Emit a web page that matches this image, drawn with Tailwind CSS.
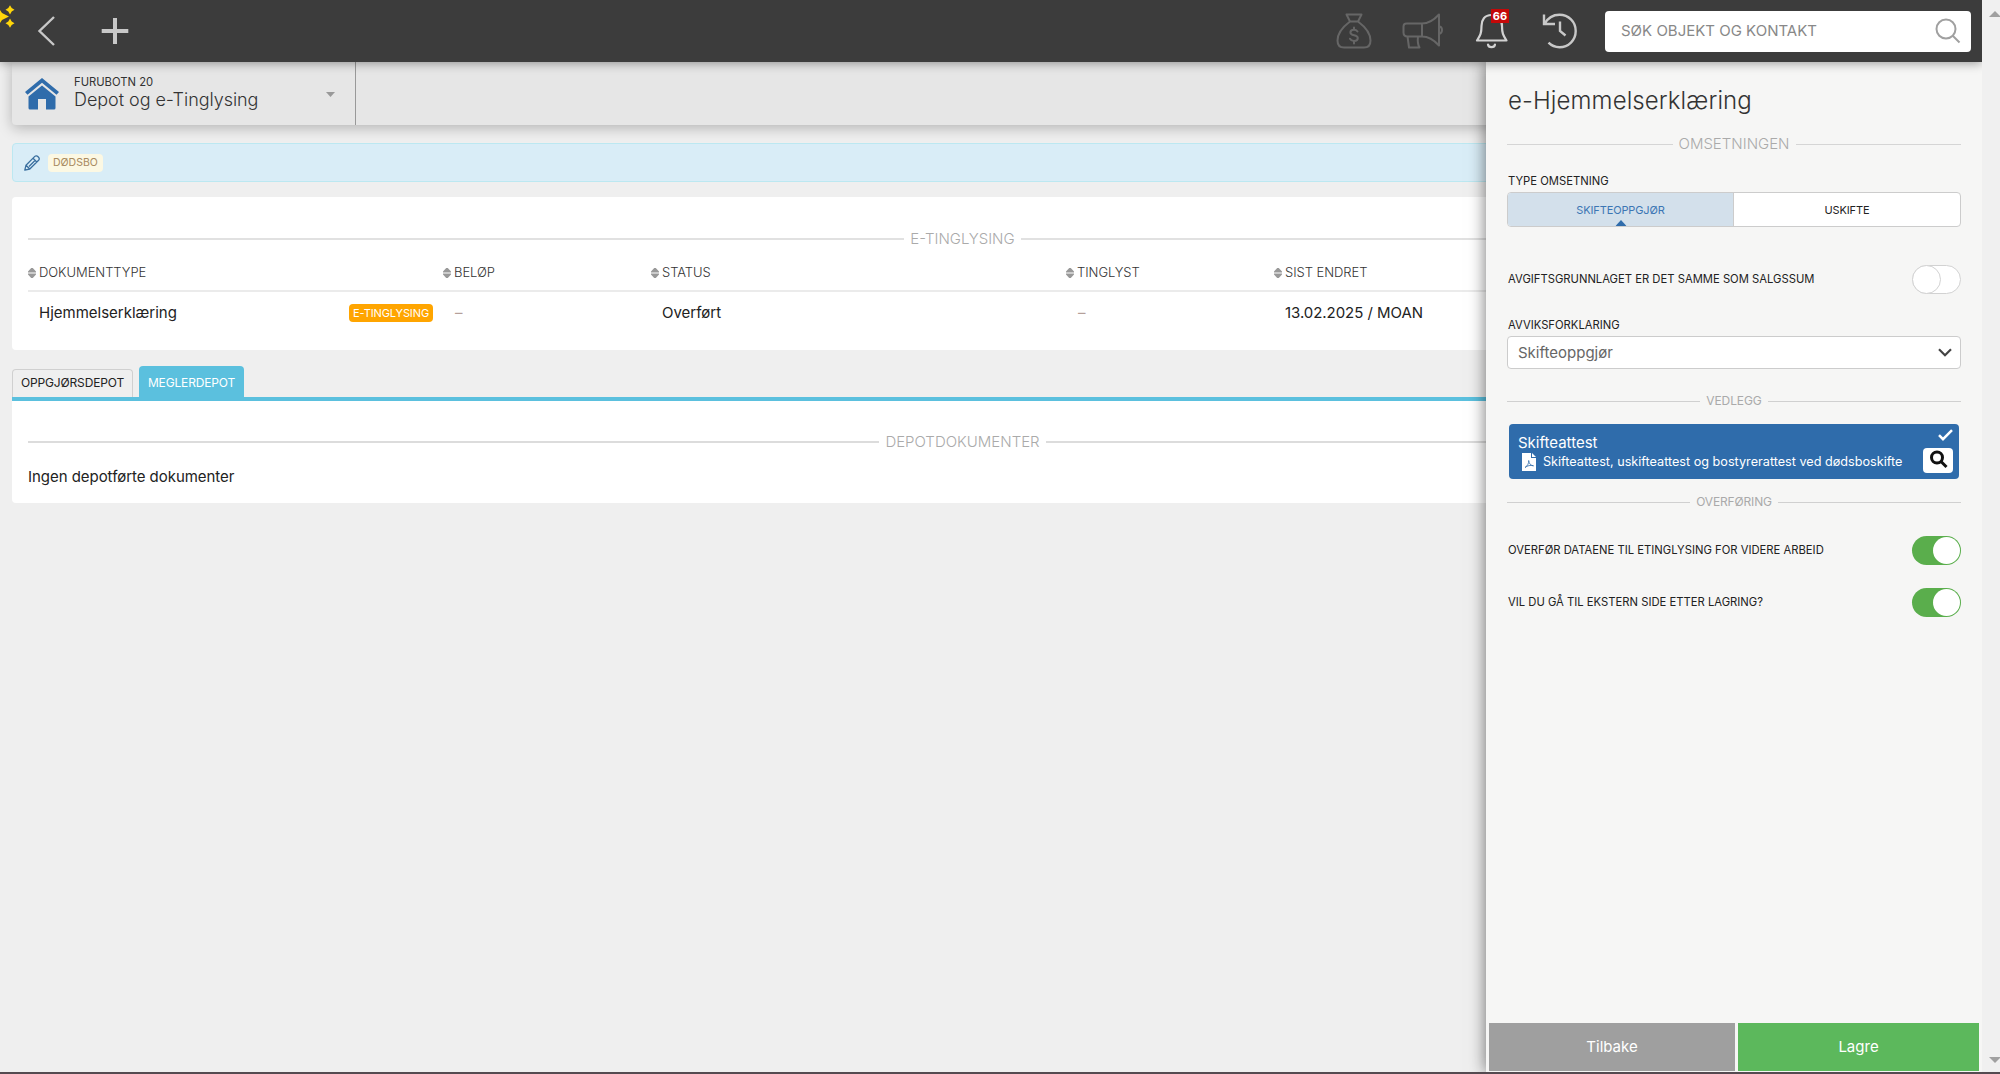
<!DOCTYPE html>
<html lang="no">
<head>
  <meta charset="UTF-8">
  <title>Depot og e-Tinglysing</title>
  <script src="https://cdn.jsdelivr.net/npm/@tailwindcss/browser@4"></script>
</head>
<body class="h-screen overflow-hidden bg-[#efefef] font-['Inter',sans-serif] text-[#222] flex flex-col">
  <div class="flex flex-1 min-h-0">
    <div class="relative w-[1982px] flex flex-col">

      <!-- Toppmeny -->
      <header class="relative z-20 h-[62px] shrink-0 bg-[#3c3c3c] shadow-[0_1px_10px_rgba(0,0,0,0.4)] flex items-center pr-[11px]">
        <svg class="absolute left-0 top-0" width="16" height="30" viewBox="0 0 16 30" fill="#ffd60a">
          <path d="M-2 7l4 6 7 3.500-7 3.500-4 6z"/>
          <path d="M10 5.200l1.700 2.900 2.800 1.700-2.800 1.700L10 14.400l-1.700-2.900-2.800-1.700 2.800-1.700zM10 18.600l1.700 2.900 2.800 1.700-2.800 1.700L10 27.800l-1.700-2.900-2.800-1.700 2.800-1.700z"/>
        </svg>
        <svg class="ml-[37px]" width="20" height="32" viewBox="0 0 20 32" fill="none" stroke="#c8c8c8" stroke-width="2.400"><path d="M17 2L2.500 16 17 30"/></svg>
        <svg class="ml-[44px]" width="28" height="28" viewBox="0 0 28 28" fill="none" stroke="#c8c8c8" stroke-width="4"><path d="M14 1v26M.7 14h26.600"/></svg>

        <div class="ml-auto flex items-center">
          <svg width="36" height="36" viewBox="0 0 36 36" fill="none" stroke="#666" stroke-width="2" stroke-linejoin="round" stroke-linecap="round">
            <path d="M10.500 1.500h15l-3.500 7h-8zM14 8.500C8 13 1.500 19 1.500 27.500c0 5 2.500 7 6.500 7h20c4 0 6.500-2 6.500-7C34.500 19 28 13 22 8.500"/>
            <path d="M21.500 18.500c-1-1.500-2.200-1.800-3.600-1.800-2 0-3.500 1-3.500 2.700 0 4 7.400 1.600 7.400 5.600 0 1.800-1.600 2.900-3.800 2.900-1.800 0-3.200-.7-4-2.200M18 14.500v2M18 28v2.500"/>
          </svg>
          <svg class="ml-[30px]" width="42" height="36" viewBox="0 0 42 36" fill="none" stroke="#666" stroke-width="2" stroke-linejoin="round">
            <path d="M20 10.500H4.500c-2 0-3 1-3 3v6c0 2.500 1.500 4 4 4H20c6 0 12 3.500 17 9V1.500c-5 5.500-11 9-17 9zM20 10.500v13M5.500 23.500l1.500 11h10.500c-1.800-3-2-7-1.500-11M37 13c4 1 4 7 0 8"/>
          </svg>
          <div class="relative ml-[31px]">
            <svg width="34" height="36" viewBox="0 0 34 36" fill="none" stroke="#d2d2d2" stroke-width="2.200" stroke-linejoin="round" stroke-linecap="round">
              <path d="M16.500 2C9.500 2 6.500 7 6.500 13c0 7-1 9-4.500 14.500h29.500C28 22 27 20 27 13 27 7 23.500 2 16.500 2zM13 31.500c.5 3.500 6.500 3.500 7 0"/>
            </svg>
            <span class="absolute left-[16px] -top-[4px] w-[18px] h-[14px] bg-[#c40808] text-white text-[11px] leading-[14px] font-bold text-center">66</span>
          </div>
          <svg class="ml-[33px]" width="36" height="36" viewBox="0 0 36 36" fill="none" stroke="#c8c8c8" stroke-width="2.400">
            <path d="M2 1.500v9.500h11M2.500 11C6 4.500 11 1.800 17.500 1.800c9 0 16.200 7 16.200 16.200S26.500 34.200 17.500 34.200c-4.500 0-8-1.500-11-4.500M18 8.500V18l5.500 4.500"/>
          </svg>
          <div class="ml-[27px] w-[366px] h-[41px] bg-white rounded flex items-center justify-between pl-4 pr-[10px]">
            <span class="text-[15px] text-[#888]">SØK OBJEKT OG KONTAKT</span>
            <svg width="26" height="26" viewBox="0 0 26 26" fill="none" stroke="#a0a0a0" stroke-width="2"><circle cx="11" cy="11" r="9.500"/><path d="M17.500 17.500l7 7"/></svg>
          </div>
        </div>
      </header>

      <main class="flex-1 pl-3">
        <!-- Objektlinje -->
        <div class="h-[63px] bg-[#e6e6e6] rounded-b flex shadow-[0_3px_14px_rgba(0,0,0,0.25)]">
          <div class="w-[344px] border-r border-[#999] flex items-center pl-[13px] pr-5">
            <svg width="34" height="32" viewBox="0 0 34 32" fill="#2f6cab">
              <path d="M17 0l17 14-2.500 2.800L17 4.800 2.500 16.800 0 14z"/>
              <path d="M17 7.500l13.500 11V30a1.500 1.500 0 0 1-1.500 1.500h-8V21h-8v10.500H5A1.500 1.500 0 0 1 3.500 30V18.500z"/>
            </svg>
            <div class="ml-[15px] pb-[3px] flex flex-col text-[#333]">
              <span class="text-[11.25px] leading-4">FURUBOTN 20</span>
              <span class="text-[18px] leading-5 tracking-[-0.05px] font-light">Depot og e-Tinglysing</span>
            </div>
            <svg class="ml-auto mt-[2px]" width="9" height="5" viewBox="0 0 9 5" fill="#999"><path d="M0 0h9L4.500 5z"/></svg>
          </div>
        </div>

        <!-- Merkelapper -->
        <div class="mt-[18px] h-[39px] bg-[#d9edf7] border border-[#bce8f1] rounded flex items-center pl-[11px] gap-2">
          <svg width="16" height="16" viewBox="0 0 16 16" fill="none" stroke="#3a6f9f" stroke-width="1.300" stroke-linejoin="round"><path d="M.8 15.200l1.200-5L10.800 1.400c1-1 2.300-.6 3 .1l.7.700c.8.800 1 2 .1 3L5.800 14zM9 3.200L12.800 7M2 10.200L5.800 14M5 11.500l6-6"/></svg>
          <span class="h-[18px] px-[5px] rounded bg-[#fcf8e3] text-[#a88a60] text-[10.5px] leading-[18px]">DØDSBO</span>
        </div>

        <!-- e-Tinglysing -->
        <section class="mt-[15px] w-[1901px] h-[153px] bg-white rounded px-4 pt-[32px]">
          <div class="flex items-center gap-[6px] h-5 text-[#aaa]">
            <div class="flex-1 h-[2px] bg-[#e1e1e1]"></div>
            <h2 class="text-[15px] font-light">E-TINGLYSING</h2>
            <div class="flex-1 h-[2px] bg-[#e1e1e1]"></div>
          </div>
          <div id="kolonner" class="mt-[9px] h-[34px] pb-[3px] border-b-2 border-[#ebebeb] grid grid-cols-[415px_208px_415px_208px_1fr] items-center text-[13px] tracking-[-0.05px] font-light text-[#333]"></div>
          <div class="h-[43px] grid grid-cols-[415px_208px_415px_208px_1fr] items-center text-[15px]">
            <div class="pl-[11px] pr-[10px] flex items-center justify-between">
              <span>Hjemmelserklæring</span>
              <span class="mb-[2px] h-[18px] px-[4px] rounded bg-[#ffa500] text-white text-[11px] leading-[18px] tracking-[-0.1px]">E-TINGLYSING</span>
            </div>
            <div class="pl-[12px] text-[#b5a09a]">–</div>
            <div class="pl-[11px]">Overført</div>
            <div class="pl-[12px] text-[#b5a09a]">–</div>
            <div class="pl-[11px] tracking-[-0.05px]">13.02.2025 / MOAN</div>
          </div>
        </section>

        <!-- Faner -->
        <div class="mt-4 flex items-end gap-[6px] h-[31px] text-[12px] tracking-[-0.15px]">
          <div class="w-[121px] h-[28px] border border-b-0 border-[#d0d0d0] rounded-t flex items-center justify-center pb-px">OPPGJØRSDEPOT</div>
          <div class="w-[105px] h-[31px] bg-[#5bc0de] text-white rounded-t flex items-center justify-center pt-[2px]">MEGLERDEPOT</div>
        </div>
        <section class="w-[1901px] h-[106px] bg-white border-t-4 border-[#5bc0de] rounded-b px-4 pt-[31px]">
          <div class="flex items-center gap-[6px] h-5 text-[#aaa]">
            <div class="flex-1 h-[1.500px] bg-[#dcdcdc]"></div>
            <h2 class="text-[15px] font-light">DEPOTDOKUMENTER</h2>
            <div class="flex-1 h-[1.500px] bg-[#dcdcdc]"></div>
          </div>
          <p class="mt-[13px] text-[15px] leading-6 tracking-[-0.04px]">Ingen depotførte dokumenter</p>
        </section>
      </main>

      <!-- Sidepanel -->
      <aside class="absolute z-10 right-0 top-[62px] bottom-0 w-[496px] bg-[#f6f6f5] shadow-[0_0_16px_rgba(0,0,0,0.55)] flex flex-col">
        <div class="flex-1 px-[21px] pt-[23px] flex flex-col">
          <h1 class="text-[24px] leading-8 tracking-[0.1px] font-light text-[#333] pl-px">e-Hjemmelserklæring</h1>
          <div class="mt-[17px] h-5 flex items-center gap-[6px] text-[#aaa]">
            <div class="flex-1 h-px bg-[#d5d5d5]"></div><h2 class="text-[15px] font-light">OMSETNINGEN</h2><div class="flex-1 h-px bg-[#d5d5d5]"></div>
          </div>

          <label class="mt-[19px] h-4 text-[11.25px] leading-4 pl-px">TYPE OMSETNING</label>
          <div class="mt-[3px] h-[35px] border border-[#ccc] rounded bg-white grid grid-cols-2 overflow-hidden text-[11px] tracking-[-0.12px]">
            <div class="relative bg-[#d3e0eb] border-r border-[#ccc] text-[#3c76b4] flex items-center justify-center pt-px">
              SKIFTEOPPGJØR
              <svg class="absolute bottom-0 left-1/2 -translate-x-1/2" width="11" height="6" viewBox="0 0 11 6" fill="#2f6cab"><path d="M0 6h11L5.500 0z"/></svg>
            </div>
            <div class="flex items-center justify-center pt-px">USKIFTE</div>
          </div>

          <div class="mt-[38px] h-[29px] flex items-center justify-between text-[11.25px] pl-px">
            <span>AVGIFTSGRUNNLAGET ER DET SAMME SOM SALGSSUM</span>
            <div class="w-[49px] h-[29px] rounded-full border border-[#d2d2d2] bg-white"><div class="-ml-px -mt-px size-[29px] rounded-full border border-[#d2d2d2] bg-white"></div></div>
          </div>

          <label class="mt-[23px] h-4 text-[11.25px] leading-4 pl-px">AVVIKSFORKLARING</label>
          <div class="mt-[3px] h-[33px] border border-[#ccc] rounded bg-white flex items-center justify-between pl-[10px] pr-2 text-[15px] text-[#666]">
            <span class="pt-px">Skifteoppgjør</span>
            <svg width="14" height="9" viewBox="0 0 14 9" fill="none" stroke="#444" stroke-width="2.200"><path d="M1 1.200l6 6 6-6"/></svg>
          </div>

          <div class="mt-[22px] h-5 flex items-center gap-[6px] text-[#aaa]">
            <div class="flex-1 h-px bg-[#d0d0d0]"></div><h2 class="text-[12px] tracking-[-0.1px]">VEDLEGG</h2><div class="flex-1 h-px bg-[#d0d0d0]"></div>
          </div>

          <div class="mt-[13px] mx-[2px] h-[55px] bg-[#2f6cab] rounded text-white flex justify-between pl-[9px] pr-[6px]">
            <div class="pt-[10px]">
              <div class="text-[15px] leading-[18px]">Skifteattest</div>
              <div class="flex items-center gap-[7px] pl-[4px]">
                <svg width="14" height="18" viewBox="0 0 14 18"><path d="M0 0h9v5h5v13H0zM10 0l4 4h-4z" fill="#fff"/><path d="M3 14.500c2.500-1.500 4-4.500 3.700-7C7 11 9 12.500 11.500 12.800c-3-.8-6-.3-8.500 1.700z" fill="none" stroke="#2f6cab" stroke-width=".8"/></svg>
                <span class="pt-px text-[12.65px] leading-[18px]">Skifteattest, uskifteattest og bostyrerattest ved dødsboskifte</span>
              </div>
            </div>
            <div class="flex flex-col items-end pt-[5px]">
              <svg width="15" height="12" viewBox="0 0 15 12" fill="none" stroke="#fff" stroke-width="2.500"><path d="M1 6.200l4 4L14 1.200"/></svg>
              <div class="mt-[7px] w-[30px] h-[25px] bg-white rounded-sm flex items-center justify-center pb-[2px]">
                <svg width="19" height="19" viewBox="0 0 19 19" fill="none" stroke="#111" stroke-width="3"><circle cx="8" cy="7.500" r="5.500"/><path d="M12 11.500l5.500 5.500"/></svg>
              </div>
            </div>
          </div>

          <div class="mt-[13px] h-5 flex items-center gap-[6px] text-[#aaa]">
            <div class="flex-1 h-px bg-[#d0d0d0]"></div><h2 class="text-[12px] tracking-[-0.15px]">OVERFØRING</h2><div class="flex-1 h-px bg-[#d0d0d0]"></div>
          </div>

          <div class="mt-[24px] h-[29px] flex items-center justify-between text-[11.25px] pl-px">
            <span>OVERFØR DATAENE TIL ETINGLYSING FOR VIDERE ARBEID</span>
            <div class="w-[49px] h-[29px] rounded-full bg-[#5aae4c] flex items-center justify-end pr-px"><div class="size-[27px] rounded-full bg-white"></div></div>
          </div>
          <div class="mt-[23px] h-[29px] flex items-center justify-between text-[11.25px] pl-px">
            <span>VIL DU GÅ TIL EKSTERN SIDE ETTER LAGRING?</span>
            <div class="w-[49px] h-[29px] rounded-full bg-[#5aae4c] flex items-center justify-end pr-px"><div class="size-[27px] rounded-full bg-white"></div></div>
          </div>
        </div>
        <div class="flex gap-[3px] px-[3px] pb-px text-[15px] text-white">
          <button class="w-[246px] h-[48px] bg-[#9f9f9f]">Tilbake</button>
          <button class="flex-1 h-[48px] bg-[#5cb85c]">Lagre</button>
        </div>
      </aside>
    </div>

    <!-- Rullefelt -->
    <div class="relative z-30 w-[18px] bg-[#f0f0f0] flex flex-col justify-between pl-[7px] pt-[11px] pb-[9px] overflow-hidden">
      <svg width="12" height="6" viewBox="0 0 12 6" fill="#a0a0a0"><path d="M0 6h12L6 0z"/></svg>
      <svg width="12" height="6" viewBox="0 0 12 6" fill="#a0a0a0"><path d="M0 0h12L6 6z"/></svg>
    </div>
  </div>
  <div class="relative z-30 h-[2px] bg-[#544a50]"></div>

  <script>
    const kolonner = ['DOKUMENTTYPE', 'BELØP', 'STATUS', 'TINGLYST', 'SIST ENDRET'];

    document.getElementById('kolonner').innerHTML = kolonner.map(navn => `
      <div class="flex items-center gap-[3px]">
        <svg width="8" height="10" viewBox="0 0 8 10" fill="#999"><path d="M0 4.400V3.600L3.200 0h1.600L8 3.600v.8zM0 5.600h8v.8L4.800 10H3.200L0 6.400z"/></svg>
        <span>${navn}</span>
      </div>`).join('');
  </script>
</body>
</html>
